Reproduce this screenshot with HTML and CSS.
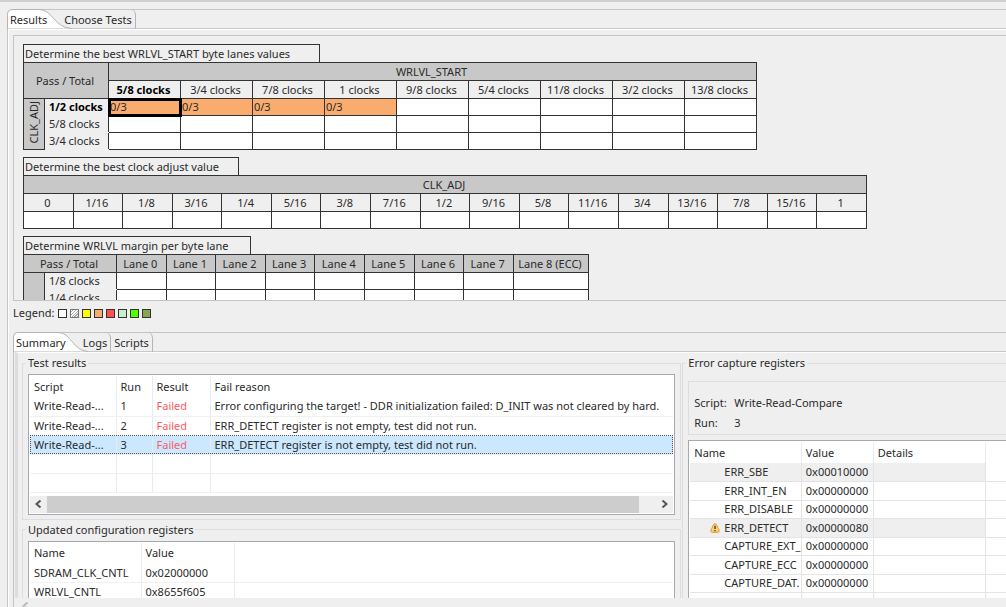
FILE: index.html
```html
<!DOCTYPE html>
<html lang="en">
<head>
    <meta charset="UTF-8">
    <meta name="viewport" content="width=device-width, initial-scale=1.0">
    <title>DDR Validation</title>
    <link rel="stylesheet" href="styles.css">
</head>
<body>

    <main class="folder">
        <nav class="tabs">
            <button class="tab active">
                <svg class="tab-shape" width="66" height="20" viewBox="0 0 66 20"><path d="M.5 20V5.500Q.5.500 5.500.500H32C46 .500 47 19 65 19.500V20Z"/></svg>
                <span>Results</span>
            </button>
            <button class="tab last">Choose Tests</button>
        </nav>

        <div class="results">
            <div class="matrix-panel">
                <section class="matrix">
                    <h2 class="title-start">Determine the best WRLVL_START byte lanes values</h2>
                    <table class="grid start-grid">
                        <colgroup><col class="side-col"><col class="label-col"><col span="9"></colgroup>
                        <thead>
                            <tr><th class="group" colspan="2" rowspan="2">Pass / Total</th><th class="group" colspan="9">WRLVL_START</th></tr>
                            <tr><th class="current">5/8 clocks</th><th>3/4 clocks</th><th>7/8 clocks</th><th>1 clocks</th><th>9/8 clocks</th><th>5/4 clocks</th><th>11/8 clocks</th><th>3/2 clocks</th><th>13/8 clocks</th></tr>
                        </thead>
                        <tbody>
                            <tr><th class="group side" rowspan="3"><span>CLK_ADJ</span></th><th class="current">1/2 clocks</th><td class="fail selected">0/3</td><td class="fail">0/3</td><td class="fail">0/3</td><td class="fail">0/3</td><td></td><td></td><td></td><td></td><td></td></tr>
                            <tr><th>5/8 clocks</th><td></td><td></td><td></td><td></td><td></td><td></td><td></td><td></td><td></td></tr>
                            <tr><th>3/4 clocks</th><td></td><td></td><td></td><td></td><td></td><td></td><td></td><td></td><td></td></tr>
                        </tbody>
                    </table>
                </section>

                <section class="matrix">
                    <h2 class="title-adjust">Determine the best clock adjust value</h2>
                    <table class="grid adjust-grid">
                        <thead>
                            <tr><th class="group" colspan="17">CLK_ADJ</th></tr>
                            <tr><th>0</th><th>1/16</th><th>1/8</th><th>3/16</th><th>1/4</th><th>5/16</th><th>3/8</th><th>7/16</th><th>1/2</th><th>9/16</th><th>5/8</th><th>11/16</th><th>3/4</th><th>13/16</th><th>7/8</th><th>15/16</th><th>1</th></tr>
                        </thead>
                        <tbody>
                            <tr><td></td><td></td><td></td><td></td><td></td><td></td><td></td><td></td><td></td><td></td><td></td><td></td><td></td><td></td><td></td><td></td><td></td></tr>
                        </tbody>
                    </table>
                </section>

                <section class="matrix">
                    <h2 class="title-margin">Determine WRLVL margin per byte lane</h2>
                    <table class="grid margin-grid">
                        <colgroup><col class="side-col"><col class="wide-col"><col span="8"><col class="ecc-col"></colgroup>
                        <thead>
                            <tr><th class="group" colspan="2">Pass / Total</th><th class="group">Lane 0</th><th class="group">Lane 1</th><th class="group">Lane 2</th><th class="group">Lane 3</th><th class="group">Lane 4</th><th class="group">Lane 5</th><th class="group">Lane 6</th><th class="group">Lane 7</th><th class="group">Lane 8 (ECC)</th></tr>
                        </thead>
                        <tbody>
                            <tr><th class="group" rowspan="2"></th><th>1/8 clocks</th><td></td><td></td><td></td><td></td><td></td><td></td><td></td><td></td><td></td></tr>
                            <tr><th>1/4 clocks</th><td></td><td></td><td></td><td></td><td></td><td></td><td></td><td></td><td></td></tr>
                        </tbody>
                    </table>
                </section>
            </div>

            <div class="legend">
                <span>Legend:</span>
                <i class="swatch white"></i>
                <i class="swatch hatched"></i>
                <i class="swatch yellow"></i>
                <i class="swatch orange"></i>
                <i class="swatch red"></i>
                <i class="swatch mint"></i>
                <i class="swatch green"></i>
                <i class="swatch olive"></i>
            </div>

            <div class="folder details">
                <nav class="tabs">
                    <button class="tab active">
                        <svg class="tab-shape" width="76" height="20" viewBox="0 0 76 20"><path d="M.5 20V5.500Q.5.500 5.500.500H45C58 .500 60 19 75 19.500V20Z"/></svg>
                        <span>Summary</span>
                    </button>
                    <button class="tab last">Logs</button>
                    <button class="tab last">Scripts</button>
                </nav>

                <div class="summary">
                    <div class="column">
                        <fieldset>
                            <legend>Test results</legend>
                            <div class="list">
                                <table class="data runs">
                                    <colgroup><col class="script-col"><col class="run-col"><col class="result-col"><col></colgroup>
                                    <thead>
                                        <tr><th>Script</th><th>Run</th><th>Result</th><th>Fail reason</th></tr>
                                    </thead>
                                    <tbody>
                                        <tr><td>Write-Read-...</td><td>1</td><td class="failed">Failed</td><td>Error configuring the target! - DDR initialization failed: D_INIT was not cleared by hard.</td></tr>
                                        <tr><td>Write-Read-...</td><td>2</td><td class="failed">Failed</td><td>ERR_DETECT register is not empty, test did not run.</td></tr>
                                        <tr class="chosen"><td>Write-Read-...</td><td>3</td><td class="failed">Failed</td><td>ERR_DETECT register is not empty, test did not run.</td></tr>
                                        <tr><td></td><td></td><td></td><td></td></tr>
                                        <tr><td></td><td></td><td></td><td></td></tr>
                                    </tbody>
                                </table>
                                <div class="scrollbar">
                                    <button aria-label="Scroll left"><svg width="7" height="8" viewBox="0 0 7 8"><path d="M5.500.500L1.500 4L5.500 7.500"/></svg></button>
                                    <div class="thumb"></div>
                                    <button aria-label="Scroll right"><svg width="7" height="8" viewBox="0 0 7 8"><path d="M1.500.500L5.500 4L1.500 7.500"/></svg></button>
                                </div>
                            </div>
                        </fieldset>

                        <fieldset>
                            <legend>Updated configuration registers</legend>
                            <div class="list">
                                <table class="data config">
                                    <colgroup><col class="name-col"><col class="value-col"><col></colgroup>
                                    <thead>
                                        <tr><th>Name</th><th>Value</th><th></th></tr>
                                    </thead>
                                    <tbody>
                                        <tr><td>SDRAM_CLK_CNTL</td><td>0x02000000</td><td></td></tr>
                                        <tr><td>WRLVL_CNTL</td><td>0x8655f605</td><td></td></tr>
                                        <tr><td></td><td></td><td></td></tr>
                                    </tbody>
                                </table>
                            </div>
                        </fieldset>
                    </div>

                    <fieldset class="capture">
                        <legend>Error capture registers</legend>
                        <dl class="run-info">
                            <dt>Script:</dt><dd>Write-Read-Compare</dd>
                            <dt>Run:</dt><dd>3</dd>
                        </dl>
                        <div class="list">
                            <table class="data registers">
                                <colgroup><col class="reg-col"><col class="hex-col"><col class="details-col"><col></colgroup>
                                <thead>
                                    <tr><th>Name</th><th>Value</th><th>Details</th><th></th></tr>
                                </thead>
                                <tbody>
                                    <tr class="changed"><td>ERR_SBE</td><td>0x00010000</td><td></td><td></td></tr>
                                    <tr><td>ERR_INT_EN</td><td>0x00000000</td><td></td><td></td></tr>
                                    <tr><td>ERR_DISABLE</td><td>0x00000000</td><td></td><td></td></tr>
                                    <tr class="changed"><td class="warned"><svg class="warning" width="10" height="10" viewBox="0 0 10 10"><path d="M5 .7C3.500.7 3.200 2.500 2.500 4C1.500 5.800.6 7 .8 8.200C1 9.300 2 9.400 5 9.400S9 9.300 9.200 8.200C9.400 7 8.500 5.800 7.500 4C6.800 2.500 6.500.7 5 .7Z" fill="#fbd17c" stroke="#d99a3c"/><path d="M5 2.800V6M5 7V8.300" stroke="#5a3a10" stroke-width="1.400"/></svg>ERR_DETECT</td><td>0x00000080</td><td></td><td></td></tr>
                                    <tr><td>CAPTURE_EXT_</td><td>0x00000000</td><td></td><td></td></tr>
                                    <tr><td>CAPTURE_ECC</td><td>0x00000000</td><td></td><td></td></tr>
                                    <tr><td>CAPTURE_DAT.</td><td>0x00000000</td><td></td><td></td></tr>
                                    <tr><td>CAPTURE_DAT.</td><td>0x00000000</td><td></td><td></td></tr>
                                </tbody>
                            </table>
                        </div>
                    </fieldset>
                </div>

                <div class="page-scroll">
                    <svg width="7" height="8" viewBox="0 0 7 8"><path d="M5.500.500L1.500 4L5.500 7.500"/></svg>
                </div>
            </div>
        </div>
    </main>

</body>
</html>
```
FILE: styles.css
```css
* {
    box-sizing: border-box;
}

body {
    font-family: "Noto Sans", "Open Sans", sans-serif;
    font-size: 11px;
    line-height: 16px;
    color: #2a2a2a;
    background-color: #efefef;
    height: 100vh;
    margin: 0;
    padding: 7px 0 0 7px;
    border-top: 2px solid #cfcfcf;
    overflow: hidden;
}

button {
    font: inherit;
    color: inherit;
    background: none;
    border: none;
    margin: 0;
    padding: 0;
}

/* Tab folders */
.folder {
    display: flex;
    flex-direction: column;
    height: 100%;
    min-height: 0;
    border-top: 1px solid #c4c4c4;
    border-left: 1px solid #c4c4c4;
    border-radius: 6px 0 0 0;
}

.tabs {
    display: flex;
    flex: none;
    height: 20px;
    margin: -1px 0 0 -1px;
    border-bottom: 1px solid #c8c8c8;
}

.tab {
    position: relative;
    height: 20px;
    padding: 1px 3px 0;
    white-space: nowrap;
}

    .tab.active {
        padding-right: 14px;
    }

    .tab.active span {
        position: relative;
    }

    .tab.last {
        border-right: 1px solid #b4b4b4;
        border-radius: 0 6px 0 0;
    }

.tab-shape {
    position: absolute;
    left: 0;
    top: 0;
    fill: #fff;
    stroke: #b4b4b4;
}

.results {
    display: flex;
    flex-direction: column;
    flex: 1;
    min-height: 0;
    border-top: 1px solid #fff;
    border-left: 1px solid #fff;
    padding: 5px 0 0 4px;
}

/* Matrices */
.matrix-panel {
    flex: 0 0 266px;
    overflow: hidden;
    border: 1px solid #c4c4c8;
    border-right: none;
    padding: 8px 0 0 9px;
}

.matrix {
    margin-bottom: 7px;
}

    .matrix h2 {
        font-size: 11px;
        font-weight: normal;
        line-height: 17px;
        height: 18px;
        margin: 0;
        padding-left: 1px;
        border: 1px solid #333;
        border-bottom: none;
        white-space: nowrap;
    }

    .matrix .title-start {
        width: 297px;
    }

    .matrix .title-adjust {
        width: 216px;
    }

    .matrix .title-margin {
        width: 228px;
    }

.grid {
    table-layout: fixed;
    border-collapse: collapse;
    white-space: nowrap;
}

    .grid th, .grid td {
        height: 17px;
        padding: 0;
        border: 1px solid #333;
        line-height: 16px;
    }

    .grid thead th {
        height: 18px;
        padding-right: 2px;
    }

    .grid th {
        font-weight: normal;
    }

    .grid td {
        background-color: #fff;
    }

    .grid tbody th {
        border-color: #efefef #333;
        padding-left: 4px;
        text-align: left;
    }

    .grid th.group {
        background-color: #c8c8c8;
        border-color: #333;
    }

    .grid th.current {
        font-weight: bold;
        color: #000;
    }

    .grid th.side {
        padding: 0;
        text-align: center;
    }

    .grid td.fail {
        background-color: #f9ac6e;
        padding-left: 1px;
    }

    .grid td.fail + td.fail {
        border-left-color: #a8764e;
    }

    .grid td.selected {
        outline: 3px solid #000;
        outline-offset: -2px;
    }

.side span {
    writing-mode: vertical-rl;
    transform: rotate(180deg);
}

.start-grid {
    width: 734px;
}

.adjust-grid {
    width: 844px;
}

.margin-grid {
    width: 566px;
}

.side-col {
    width: 21px;
}

.label-col {
    width: 64px;
}

.wide-col {
    width: 72px;
}

.ecc-col {
    width: 75px;
}

/* Legend */
.legend {
    display: flex;
    flex: none;
    align-items: center;
    gap: 3px;
    height: 24px;
    margin-bottom: 7px;
}

.legend span {
    margin-right: 1px;
}

.swatch {
    width: 9px;
    height: 9px;
    border: 1px solid #333;
}

.white {
    background-color: #fff;
}

.hatched {
    background: repeating-linear-gradient(135deg, #fff 0 1px, #aaa 1px 2px);
    border-color: #777;
}

.yellow {
    background-color: #ffff00;
}

.orange {
    background-color: #f9ac6e;
}

.red {
    background-color: #ff5050;
}

.mint {
    background-color: #c6efce;
}

.green {
    background-color: #50ff00;
}

.olive {
    background-color: #84a850;
}

/* Summary */
.details {
    flex: 1;
}

.summary {
    display: grid;
    grid-template-columns: 67fr 33fr;
    flex: 1;
    min-height: 0;
    overflow: hidden;
    border-top: 1px solid #fff;
    border-left: 3px solid #ddd;
    margin-left: 1px;
    padding: 2px 0 0 4px;
}

.column {
    min-width: 0;
}

fieldset {
    min-width: 0;
    margin: 0 0 2px;
    padding: 3px 5px 4px;
    border: 1px solid #ddd;
}

legend {
    padding: 0 2px;
    margin-left: -2px;
}

fieldset.capture {
    border-right: none;
    margin-left: 1px;
    padding: 10px 0 0 5px;
}

.list {
    background-color: #fff;
    border: 1px solid #a8a8b0;
    padding: 1px;
    overflow: hidden;
}

.data {
    table-layout: fixed;
    width: 100%;
    border-collapse: collapse;
    white-space: nowrap;
}

    .data th, .data td {
        height: 19px;
        padding: 0 0 0 4px;
        border-right: 1px solid #e6ecf2;
        border-bottom: 1px solid #f0f0f0;
        font-weight: normal;
        text-align: left;
        overflow: hidden;
    }

    .data th {
        height: 21px;
        border-bottom: none;
    }

    .data th:last-child, .data td:last-child {
        border-right: none;
    }

    .data .failed {
        color: #ff5a64;
    }

    .data .chosen {
        background-color: #cce8ff;
        outline: 1px dotted #555;
        outline-offset: -1px;
    }

.script-col {
    width: 86px;
}

.run-col {
    width: 36px;
}

.result-col {
    width: 58px;
}

.name-col {
    width: 111px;
}

.value-col {
    width: 93px;
}

.reg-col {
    width: 111px;
}

.hex-col {
    width: 72px;
}

.details-col {
    width: 112px;
}

.scrollbar {
    display: flex;
    height: 17px;
    margin-top: 3px;
    background-color: #efefef;
}

    .scrollbar button {
        width: 17px;
    }

    .scrollbar button:last-child {
        margin-left: auto;
    }

    .scrollbar path, .page-scroll path {
        fill: none;
        stroke: #555;
        stroke-width: 2;
    }

.thumb {
    flex: 0 0 92%;
    background-color: #cdcdcd;
}

.run-info {
    display: grid;
    grid-template-columns: 40px 1fr;
    line-height: 20px;
    margin: 0 0 5px;
    padding: 11px 0 1px 5px;
    border: 1px solid #ddd;
    border-right: none;
}

    .run-info dd {
        margin: 0;
    }

.capture .list {
    border-right: none;
    padding-right: 0;
}

.registers td {
    height: 18px;
    border-color: #e4e4e4;
}

.registers tr:nth-child(even) td {
    height: 19px;
}

.registers td:first-child {
    padding-left: 34px;
}

.registers td.warned {
    padding-left: 20px;
}

.registers .changed td:not(:last-child) {
    background-color: #efefef;
}

.warning {
    fill: none;
    margin-right: 4px;
    vertical-align: -1px;
}

.page-scroll {
    flex: none;
    height: 9px;
    padding-left: 8px;
    overflow: hidden;
}

    .page-scroll path {
        stroke: #bbb;
    }
```
